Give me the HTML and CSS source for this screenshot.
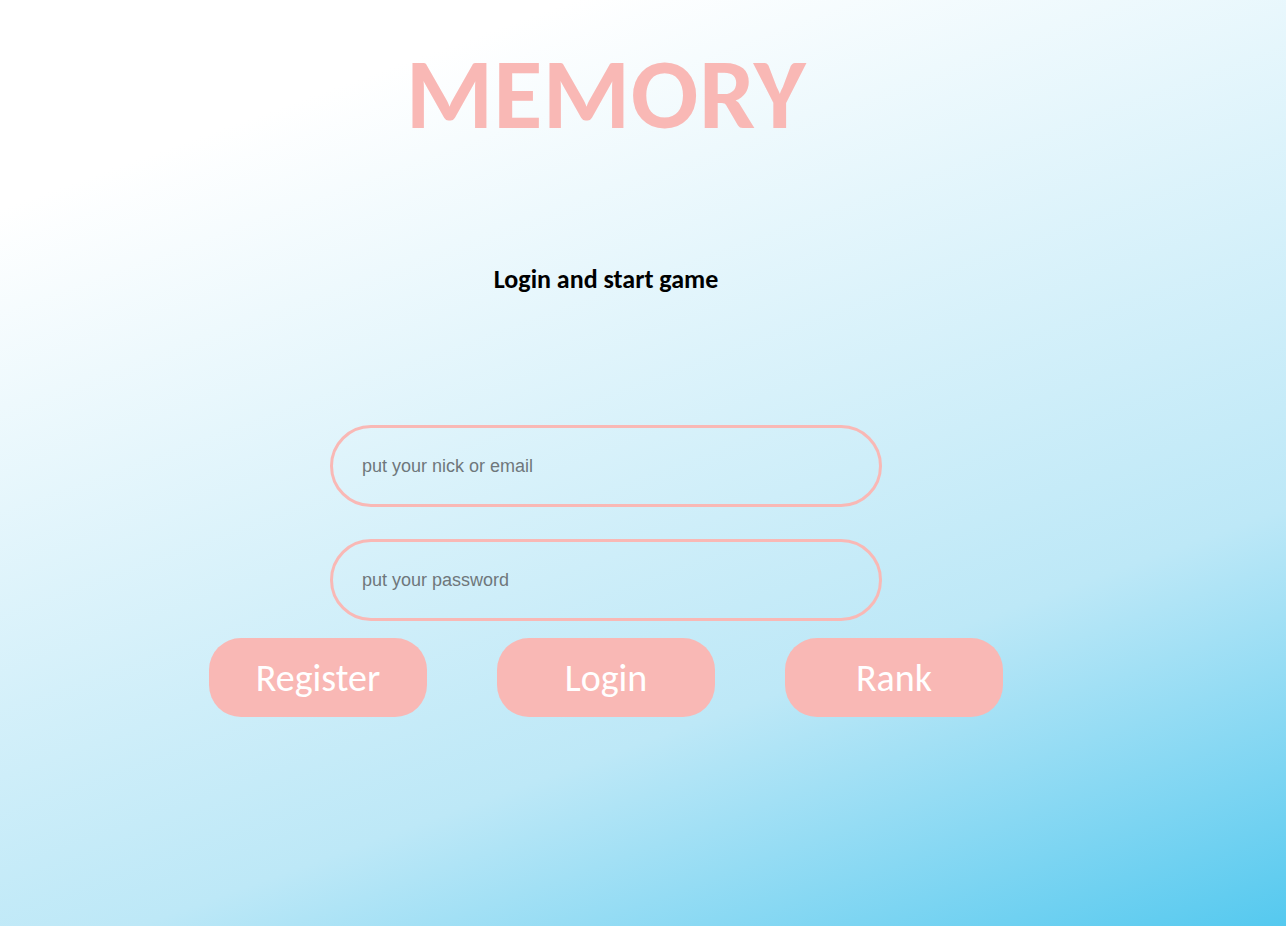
FILE: index.html
```html
<!DOCTYPE html>
<html lang="en">
<head>
<meta charset="utf-8">
<title>Memory</title>
<link rel="stylesheet" href="styles.css">
</head>
<body>
<main class="page">
  <h1 class="title">MEMORY</h1>
  <h2 class="subtitle">Login and start game</h2>
  <form class="login-form">
    <input class="field" type="text" placeholder="put your nick or email">
    <input class="field" type="password" placeholder="put your password">
    <div class="actions">
      <button type="button" class="btn">Register</button>
      <button type="button" class="btn">Login</button>
      <button type="button" class="btn">Rank</button>
    </div>
  </form>
</main>
</body>
</html>
```

FILE: styles.css
```css
html, body {
  margin: 0;
  padding: 0;
  height: 100%;
}
body {
  background: linear-gradient(160deg, #ffffff 15%, #bde8f7 70%, #55c9ef 100%);
  font-family: Carlito, Lato, "Open Sans", sans-serif;
  min-height: 926px;
}
.page {
  width: 1212px;
  display: flex;
  flex-direction: column;
  align-items: center;
}
.title {
  margin: 44px 0 0;
  font-size: 100px;
  line-height: 100px;
  font-weight: 700;
  color: #f9b8b5;
  letter-spacing: 0.5px;
}
.subtitle {
  margin: 120px 0 0;
  font-size: 26px;
  line-height: 30px;
  font-weight: 700;
  color: #000;
}
.login-form {
  margin-top: 131px;
  display: flex;
  flex-direction: column;
  align-items: center;
}
.field {
  box-sizing: border-box;
  width: 552px;
  height: 82px;
  border: 3px solid #f9b8b5;
  border-radius: 41px;
  background: transparent;
  padding: 0 0 0 29px;
  font-family: "Liberation Sans", Arial, sans-serif;
  font-size: 18px;
  color: #333;
  outline: none;
}
.field + .field {
  margin-top: 32px;
}
.field::placeholder {
  color: #6f777b;
}
.actions {
  margin-top: 17px;
  display: flex;
  gap: 70px;
}
.btn {
  width: 218px;
  height: 79px;
  border: none;
  border-radius: 32px;
  background: #f9b8b5;
  color: #fff;
  font-family: Carlito, Lato, "Open Sans", sans-serif;
  font-size: 38px;
  padding: 0;
  cursor: pointer;
}
```
